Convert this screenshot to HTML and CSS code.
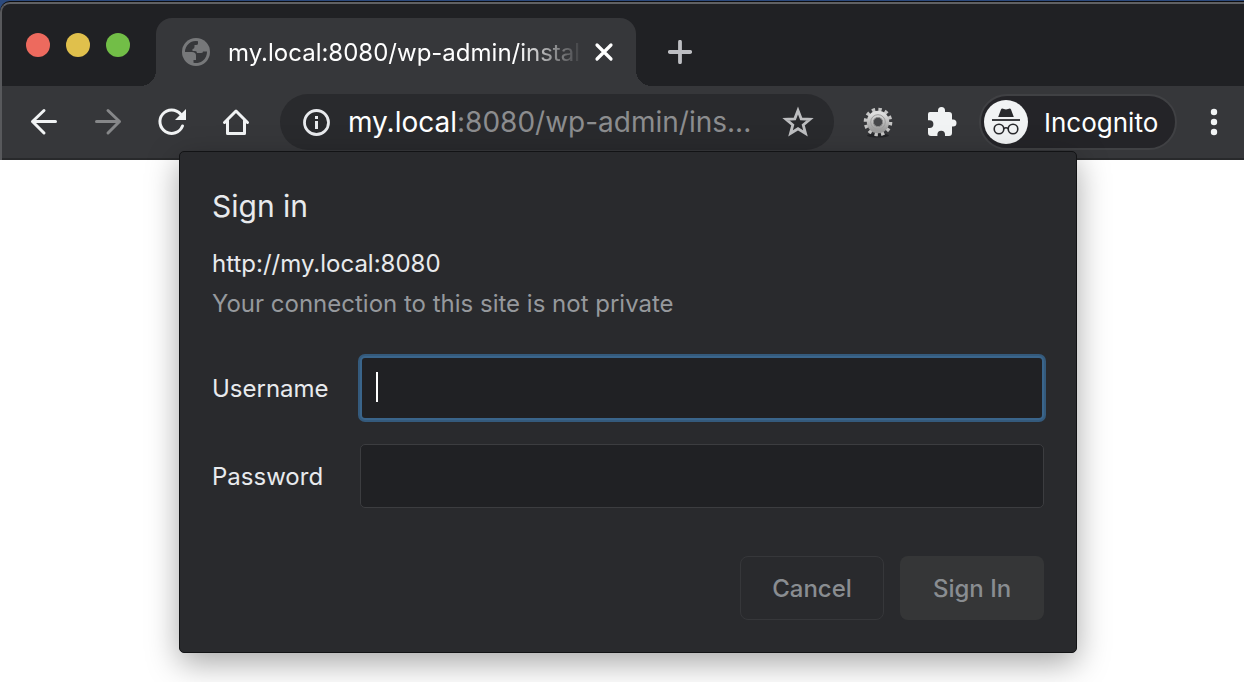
FILE: index.html
```
<!DOCTYPE html>
<html lang="en">
  <head>
    <meta charset="utf-8">
    <title>Sign in</title>
    <link rel="stylesheet" href="styles.css">
  </head>
  <body>
    <header class="browser">
      <div class="tab-strip">
        <div class="lights">
          <button class="light red" aria-label="Close window"></button>
          <button class="light yellow" aria-label="Minimize window"></button>
          <button class="light green" aria-label="Zoom window"></button>
        </div>

        <div class="tab">
          <svg width="28" height="28" viewBox="0 0 28 28">
            <circle cx="14" cy="14" r="14" fill="#77787a"/>
            <path d="M3 14A11 11 0 0 1 16 3.200V5.500Q16 7 14 7H12.500V9Q12.500 11 10.500 11V13H13Q15 13 15 15H19Q21 15 21 13.500H25A11 11 0 0 1 11.500 24.700V22H14V19H11Q9.500 19 9.500 17V14Z" fill="#36373a"/>
            <path d="M3 14H10Q14 14 14 17.500V19H9.500L4.500 16Z" fill="#77787a"/>
          </svg>
          <span class="tab-title">my.local:8080/wp-admin/instal</span>
          <button class="tab-close" aria-label="Close tab">
            <svg width="20" height="20" viewBox="0 0 20 20">
              <path d="M3 3L17 17M17 3L3 17" stroke="#fff" stroke-width="3.200" stroke-linecap="round"/>
            </svg>
          </button>
        </div>

        <button class="new-tab" aria-label="New tab">
          <svg width="24" height="24" viewBox="0 0 24 24">
            <path d="M12 1.800V22.200M1.800 12H22.200" stroke="#bdbec2" stroke-width="3.800" stroke-linecap="round"/>
          </svg>
        </button>
      </div>

      <div class="toolbar">
        <button class="tool" aria-label="Back">
          <svg width="32" height="32" viewBox="0 0 32 32" fill="none" stroke="#f1f3f4" stroke-width="3" stroke-linecap="round" stroke-linejoin="round">
            <path d="M27.500 15.500H4.500M16 4.500L4.500 15.500L16 27"/>
          </svg>
        </button>
        <button class="tool" aria-label="Forward">
          <svg width="32" height="32" viewBox="0 0 32 32" fill="none" stroke="#868789" stroke-width="3" stroke-linecap="round" stroke-linejoin="round">
            <path d="M4.500 15.500H27.500M16 4.500L27.500 15.500L16 27"/>
          </svg>
        </button>
        <button class="tool" aria-label="Reload">
          <svg width="32" height="32" viewBox="0 0 32 32">
            <path d="M26.500 20A11.700 11.700 0 1 1 24.500 8" fill="none" stroke="#f1f3f4" stroke-width="3" stroke-linecap="round"/>
            <path d="M30 3V14H19Z" fill="#f1f3f4"/>
          </svg>
        </button>
        <button class="tool" aria-label="Home">
          <svg width="32" height="32" viewBox="0 0 32 32">
            <path d="M4.500 16.500L16 5L27.500 16.500M7.500 14.500V27.500H24.500V14.500" fill="none" stroke="#f1f3f4" stroke-width="3" stroke-linecap="round" stroke-linejoin="round"/>
          </svg>
        </button>

        <div class="address">
          <svg width="28" height="28" viewBox="0 0 28 28">
            <circle cx="14.500" cy="14.500" r="12" fill="none" stroke="#e8eaed" stroke-width="2.800"/>
            <path d="M13 8H16V11H13ZM13 13H16V21H13Z" fill="#e8eaed"/>
          </svg>
          <span class="url"><span class="host">my.local</span>:8080/wp-admin/ins...</span>
          <button aria-label="Bookmark this tab">
            <svg width="32" height="32" viewBox="0 0 32 32">
              <path d="M16 4.500L19.200 12.800L28 13.300L21.200 18.900L23.500 27.500L16 22.700L8.500 27.500L10.800 18.900L4 13.300L12.800 12.800Z" fill="none" stroke="#bdbec0" stroke-width="2.800"/>
            </svg>
          </button>
        </div>

        <button class="tool" aria-label="Settings extension">
          <svg width="32" height="32" viewBox="0 0 32 32">
            <defs>
              <linearGradient id="metal" x1="0" y1="0" x2="0" y2="1">
                <stop offset="0" stop-color="#dedede"/>
                <stop offset="1" stop-color="#9a9a9a"/>
              </linearGradient>
            </defs>
            <ellipse cx="16" cy="29.500" rx="11" ry="2" fill="#222326"/>
            <circle cx="16" cy="16" r="12.400" fill="none" stroke="#c4c4c4" stroke-width="3.800" stroke-dasharray="3.300 3.193"/>
            <circle cx="16" cy="16" r="7.900" fill="none" stroke="url(#metal)" stroke-width="6.600"/>
            <circle cx="16" cy="16" r="7.300" fill="none" stroke="#9c9c9c" stroke-width="1"/>
            <circle cx="16" cy="16" r="4.600" fill="#46474a" stroke="#8a8a8a" stroke-width="1"/>
          </svg>
        </button>
        <button class="tool" aria-label="Extensions">
          <svg width="32" height="32" viewBox="0 0 32 32">
            <path d="M4 6H12V4.500A3.500 3.500 0 0 1 19 4.500V6H23Q26 6 26 9V13.500H27A3.500 3.500 0 0 1 27 20.500H26V27Q26 30 23 30H19V28.500A3.800 3.800 0 0 0 11.400 28.500V30H5Q2 30 2 27V22H3.500A3.900 3.900 0 0 0 3.500 14.200H2V8Q2 6 4 6Z" fill="#f1f3f4"/>
          </svg>
        </button>

        <button class="incognito">
          <svg width="44" height="44" viewBox="0 0 44 44">
            <circle cx="22" cy="22" r="22" fill="#f1f3f4"/>
            <path d="M14.200 17L17 9.500Q17.500 8.300 19 8.700L22 9.500L25 8.700Q26.500 8.300 27 9.500L29.800 17Z" fill="#28292c"/>
            <path d="M8 20H36" stroke="#28292c" stroke-width="1.800"/>
            <g fill="none" stroke="#28292c" stroke-width="1.600">
              <circle cx="15" cy="29" r="4.800"/>
              <circle cx="29" cy="29" r="4.800"/>
              <path d="M19.800 28.500Q22 27 24.200 28.500"/>
            </g>
          </svg>
          Incognito
        </button>

        <button class="menu" aria-label="Menu">
          <svg width="8" height="28" viewBox="0 0 8 28" fill="#f1f3f4">
            <circle cx="4" cy="4" r="3.200"/>
            <circle cx="4" cy="14" r="3.200"/>
            <circle cx="4" cy="24" r="3.200"/>
          </svg>
        </button>
      </div>
    </header>

    <main class="page">
      <form class="dialog">
        <h1 class="dialog-title">Sign in</h1>
        <p class="origin">http://my.local:8080</p>
        <p class="warning">Your connection to this site is not private</p>

        <div class="field">
          <label for="username">Username</label>
          <div class="input-wrap">
            <input class="focused" id="username" type="text">
            <span class="caret"></span>
          </div>
        </div>
        <div class="field">
          <label for="password">Password</label>
          <div class="input-wrap">
            <input id="password" type="password">
          </div>
        </div>

        <div class="actions">
          <button class="cancel" type="button">Cancel</button>
          <button class="sign-in" type="submit">Sign In</button>
        </div>
      </form>
    </main>
  </body>
</html>
```

FILE: styles.css
```
* {
  box-sizing: border-box;
}

body {
  margin: 0;
  padding-top: 2px;
  background: linear-gradient(#2c4a7d 10px, white 10px);
  font-family: Inter, "Liberation Sans", sans-serif;
  font-size: 24px;
  color: #e8eaed;
}

button {
  border: none;
  padding: 0;
  background: none;
  color: inherit;
  font-family: inherit;
  font-size: inherit;
  cursor: pointer;
}

svg {
  display: block;
  flex-shrink: 0;
}

/* browser window */

.browser {
  border-top: 2px solid #606164;
  border-left: 2px solid #58595c;
  border-top-left-radius: 10px;
  background-color: #202124;
  box-shadow: 0 -1px 0 #0c0d10;
}

.tab-strip {
  display: flex;
  height: 82px;
  padding-top: 14px;
  padding-left: 24px;
}

.lights {
  display: flex;
  gap: 16px;
  margin-top: 15px;
  margin-right: 26px;
}

.light {
  width: 24px;
  height: 24px;
  border-radius: 50%;
}

.red {
  background-color: #ed6a5e;
}

.yellow {
  background-color: #e0c04c;
}

.green {
  background-color: #72be47;
}

.tab {
  position: relative;
  display: flex;
  align-items: center;
  width: 480px;
  padding-left: 26px;
  border-radius: 16px 16px 0 0;
  background-color: #36373a;
  color: white;
}

.tab::before,
.tab::after {
  content: "";
  position: absolute;
  bottom: 0;
  width: 16px;
  height: 16px;
}

.tab::before {
  right: 100%;
  background: radial-gradient(circle at 0 0, transparent 16px, #36373a 16px);
}

.tab::after {
  left: 100%;
  background: radial-gradient(circle at 100% 0, transparent 16px, #36373a 16px);
}

.tab-title {
  width: 356px;
  margin-left: 18px;
  white-space: nowrap;
  -webkit-mask-image: linear-gradient(to right, black 290px, transparent 356px);
  mask-image: linear-gradient(to right, black 290px, transparent 356px);
}

.tab-close {
  margin-left: 10px;
}

.new-tab {
  margin-left: 32px;
}

.toolbar {
  display: flex;
  align-items: center;
  height: 74px;
  padding-left: 10px;
  border-bottom: 2px solid #28292b;
  background-color: #36373a;
}

.tool {
  display: flex;
  justify-content: center;
  width: 64px;
}

.address {
  display: flex;
  align-items: center;
  flex: 1;
  height: 56px;
  margin: 0 12px;
  padding: 0 20px 0 22px;
  border-radius: 28px;
  background-color: #292a2d;
}

.url {
  flex: 1;
  margin-left: 18px;
  white-space: nowrap;
  font-size: 28px;
  color: #8c8d8f;
}

.host {
  color: white;
}

.incognito {
  display: flex;
  align-items: center;
  gap: 16px;
  width: 198px;
  height: 56px;
  margin: 0 7px 0 5px;
  padding-left: 3px;
  border: 2px solid #404144;
  border-radius: 28px;
  background-color: #242428;
  color: white;
  font-size: 26px;
}

.menu {
  display: flex;
  justify-content: center;
  width: 60px;
}

/* sign in dialog */

.page {
  position: relative;
  height: 522px;
  background-color: white;
}

.dialog {
  position: absolute;
  top: -9px;
  left: 179px;
  right: 167px;
  padding: 32px;
  border: 1px solid #121315;
  border-radius: 5px;
  background-color: #292a2d;
  box-shadow: 0 10px 32px rgba(0, 0, 0, 0.35);
}

.dialog-title {
  margin: 2px 0 18px;
  font-size: 30px;
  font-weight: normal;
  line-height: 40px;
}

.origin,
.warning {
  margin: 0;
  line-height: 40px;
}

.warning {
  color: #96999d;
}

.field {
  display: flex;
  align-items: center;
  margin-bottom: 24px;
}

.warning + .field {
  margin-top: 32px;
}

.field label {
  width: 148px;
}

.input-wrap {
  position: relative;
  flex: 1;
}

input {
  display: block;
  width: 100%;
  height: 64px;
  padding: 0 16px;
  border: 1px solid #3c3d40;
  border-radius: 5px;
  outline: none;
  background-color: #202124;
  color: #e8eaed;
  font-family: inherit;
  font-size: 24px;
}

.focused {
  border: 2px solid #3a658b;
  box-shadow: 0 0 0 2px #345a7c;
}

.caret {
  position: absolute;
  top: 16px;
  left: 16px;
  width: 2px;
  height: 30px;
  background-color: white;
}

.actions {
  display: flex;
  justify-content: flex-end;
  gap: 16px;
  margin-top: 48px;
}

.actions button {
  width: 144px;
  height: 64px;
  border-radius: 8px;
  color: #898d91;
  font-weight: 500;
}

.actions .cancel {
  border: 1px solid #36373a;
}

.actions .sign-in {
  background-color: #353637;
}
```
